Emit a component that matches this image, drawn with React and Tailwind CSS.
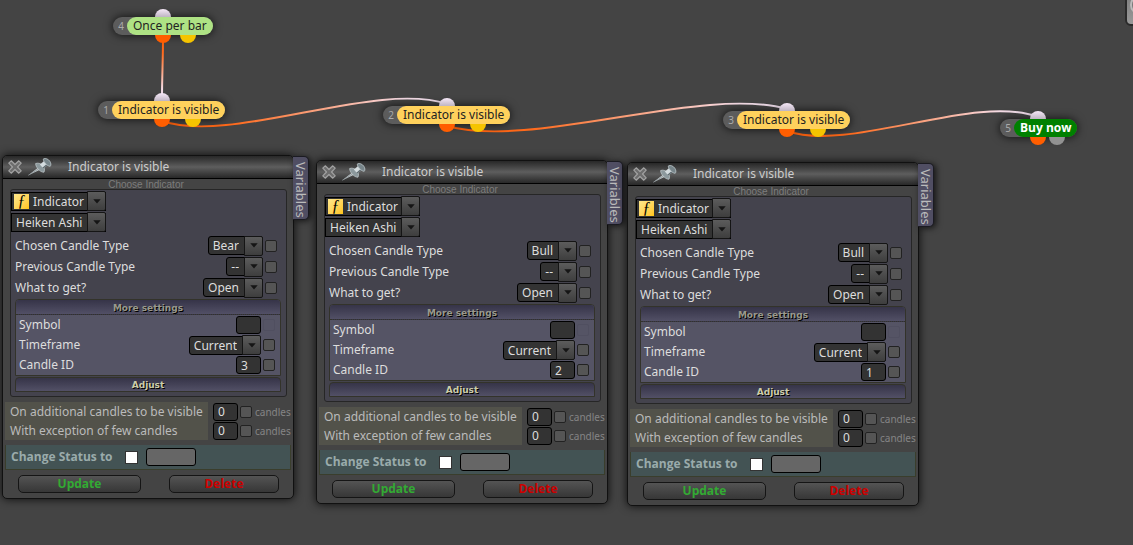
import React, { useState } from "react";

const NODES = [
    { id: 4, label: "Once per bar", pos: "left-[113px] top-[17px]", color: "bg-[#aee284] text-[#222]", port: "left-[42px]", port2: "left-[67px] bg-[#f5c400]" },
    { id: 1, label: "Indicator is visible", pos: "left-[98px] top-[101px]", color: "bg-[#ffd15c] text-[#222]", port: "left-[56px]", port2: "left-[87px] bg-[#f5c400]" },
    { id: 2, label: "Indicator is visible", pos: "left-[383px] top-[106px]", color: "bg-[#ffd15c] text-[#222]", port: "left-[56px]", port2: "left-[87px] bg-[#f5c400]" },
    { id: 3, label: "Indicator is visible", pos: "left-[723px] top-[111px]", color: "bg-[#ffd15c] text-[#222]", port: "left-[56px]", port2: "left-[87px] bg-[#f5c400]" },
    { id: 5, label: "Buy now", pos: "left-[1000px] top-[119px]", color: "bg-[#008000] text-white font-['Open_Sans',sans-serif] font-bold", port: "left-[30px]", port2: "left-[49px] bg-[#929292]" },
];

const WINDOWS = [
    { id: 1, title: "Indicator is visible", pos: "left-[2px] top-[155px]", candle: "Bear", candleId: "3" },
    { id: 2, title: "Indicator is visible", pos: "left-[316px] top-[160px]", candle: "Bull", candleId: "2" },
    { id: 3, title: "Indicator is visible", pos: "left-[627px] top-[162px]", candle: "Bull", candleId: "1" },
];

const WIRES = [
    { id: "w1", d: "M163 38 C163 58 162 78 162 98", x1: 163, y1: 38, x2: 162, y2: 98 },
    { id: "w2", d: "M162 121 C232 145 376 80 447 104", x1: 162, y1: 121, x2: 447, y2: 104 },
    { id: "w3", d: "M447 126 C532 150 702 85 787 109", x1: 447, y1: 126, x2: 787, y2: 109 },
    { id: "w4", d: "M787 131 C850 153 975 93 1038 117", x1: 787, y1: 131, x2: 1038, y2: 117 },
];

const Wires = () => (
    <svg className="absolute left-0 top-0 pointer-events-none" width="1133" height="150" fill="none">
        <defs>
            {WIRES.map((w) => (
                <linearGradient key={w.id} id={w.id} gradientUnits="userSpaceOnUse" x1={w.x1} y1={w.y1} x2={w.x2} y2={w.y2}>
                    <stop offset="0" stopColor="#ff5f0a" />
                    <stop offset="0.25" stopColor="#ff6a1c" />
                    <stop offset="0.85" stopColor="#f6dce6" />
                    <stop offset="1" stopColor="#f3e4f3" />
                </linearGradient>
            ))}
        </defs>
        {WIRES.map((w) => (
            <path key={w.id} d={w.d} stroke={`url(#${w.id})`} strokeWidth="2" />
        ))}
    </svg>
);

const Node = ({ node }) => (
    <div className={`absolute ${node.pos}`}>
        <button
            type="button"
            className="flex h-[18px] items-center rounded-full bg-[#5c5c5c] shadow-[0_0_10px_rgba(0,0,0,0.8)] whitespace-nowrap"
        >
            <span className={`absolute -top-2 size-4 rounded-full bg-linear-to-b from-[#f6e8f8] to-[#8a8490] ${node.port}`} />
            <span className={`absolute top-[10px] size-4 rounded-full bg-[#ff5e00] ${node.port}`} />
            <span className={`absolute top-[10px] size-4 rounded-full ${node.port2}`} />
            <span className="w-[14px] pl-[2px] text-center text-[10px] leading-[18px] text-[#aaa]">{node.id}</span>
            <span className={`relative h-[18px] rounded-full px-[6px] text-[12px] leading-[18px] ${node.color}`}>
                {node.label}
            </span>
        </button>
    </div>
);

const CloseIcon = () => (
    <svg width="14" height="14" viewBox="0 0 14 14">
        <path
            d="M3.2 .8 7 4.5 10.8 .8 13.2 3.2 9.5 7 13.2 10.8 10.8 13.2 7 9.5 3.2 13.2 .8 10.8 4.5 7 .8 3.2Z"
            fill="#6d6d6d"
            stroke="#a2a2a2"
            strokeWidth="1.2"
            strokeLinejoin="round"
        />
    </svg>
);

const PinIcon = () => (
    <svg width="24" height="18" viewBox="0 0 24 18">
        <path d="M.3 17.3 11.2 8.8 13 11.2Z" fill="#c5cdd0" />
        <path d="M.3 17.3 12 10" stroke="#8b9498" strokeWidth=".8" />
        <path d="M7.6 5.6C9.5 4.7 12.6 5.2 14.6 7.4 16.6 9.6 17 12.3 16 14.2 13.7 14.4 11.4 12.6 9.8 10.6 8.5 9 7.6 7.2 7.6 5.6Z" fill="#8c999d" stroke="#c3cccf" strokeWidth=".7" />
        <path d="M11.8 6.6 16.8 2.6 20.4 6.4 15.4 10.6Z" fill="#d4dcdf" />
        <path d="M14.4 9.8 19.2 5.6 20.4 6.4 15.4 10.6Z" fill="#5c696e" />
        <path d="M15.4 .9C17.6-.2 20.2 1 21.8 3.2 23 5 23.3 7.2 22.2 8.3 20.2 8.2 18.4 6.6 17 4.9 15.8 3.4 15.1 2 15.4.9Z" fill="#77858a" stroke="#bcc6ca" strokeWidth=".8" />
    </svg>
);

const Dropdown = ({ id, label, options, wide, icon }) => (
    <span className="relative flex h-5 items-center">
        {icon && (
            <span
                aria-hidden="true"
                className="pointer-events-none absolute left-[3px] size-[15px] bg-linear-to-br from-[#ffe88a] to-[#ffc40a] text-center font-['Liberation_Serif',serif] text-[16px] leading-[14px] text-black italic"
            >
                ƒ
            </span>
        )}
        <select
            id={id}
            aria-label={label}
            className={`field-sizing-content h-[19px] appearance-none border border-black bg-[#333] text-[12px] leading-[17px] text-[#ddd] outline-none ${
                icon ? "pl-[21px] pr-[19px]" : "pl-1 pr-[23px]"
            } ${wide ? "w-[95px]" : "rounded-[3px]"}`}
        >
            {options.map((o) => (
                <option key={o}>{o}</option>
            ))}
        </select>
        <span className="pointer-events-none absolute right-0 flex h-5 w-[19px] items-center justify-center rounded-r-[2px] border border-[#151515] bg-linear-to-b from-[#5c5c5c] to-[#3e3e3e]">
            <svg width="8" height="5" viewBox="0 0 8 5">
                <path d="M.3 .2H7.7L4 4.6Z" fill="#151515" />
            </svg>
        </span>
    </span>
);

const Tick = ({ label, faded }) => (
    <input
        type="checkbox"
        aria-label={label}
        className={`size-3 shrink-0 appearance-none rounded-[2px] border checked:bg-[#ddd] ${
            faded ? "border-[#504f60] bg-transparent" : "border-[#222] bg-[#555]"
        }`}
    />
);

const TextBox = ({ id, value }) => (
    <input
        id={id}
        type="text"
        defaultValue={value}
        className="h-[18px] w-[25px] shrink-0 rounded-[3px] border border-black bg-[#333] px-1 text-[12px] leading-4 text-[#ddd] outline-none"
    />
);

const Row = ({ id, label, children, nested, faded }) => (
    <div className={`flex items-center gap-[2px] ${nested ? "h-5 pl-[3px] pr-[5px]" : "h-[21px] pr-1"}`}>
        <label htmlFor={id} className="flex-1">
            {label}
        </label>
        {children}
        <Tick label={`${label} adjust`} faded={faded} />
    </div>
);

const ExtraRow = ({ id, label }) => (
    <div className="flex h-[19px] items-center">
        <label htmlFor={id} className="mr-[5px] h-[19px] w-[203px] bg-[#52524a] pl-[5px] leading-[19px] text-[#bbb]">
            {label}
        </label>
        <TextBox id={id} value="0" />
        <span className="flex items-center gap-[3px] pl-[2px] text-[10px] text-[#848484]">
            <Tick label={`${label} in candles`} />
            candles
        </span>
    </div>
);

const BAR =
    "block h-[15px] w-full border-[#33332a] bg-linear-to-b from-[#363448] to-[#525066] text-center font-['DejaVu_Sans',sans-serif] text-[9px] font-bold [text-shadow:1px_1px_0_#000]";

const BUTTON =
    "h-[18px] rounded-[5px] border border-[#151515] bg-linear-to-b from-[#545454] to-[#373737] font-['Open_Sans',sans-serif] text-[12px] leading-4 font-bold";

const IndicatorWindow = ({ win }) => {
    const [status, setStatus] = useState("");
    const key = `win${win.id}`;

    return (
        <section
            className={`absolute w-[292px] rounded-[5px] border border-[#111] bg-[#444] text-[12px] leading-4 text-[#ddd] shadow-[0_0_10px_rgba(0,0,0,0.85)] ${win.pos}`}
        >
            {/* Side tab */}
            <button
                type="button"
                className="absolute top-0 left-full h-[64px] rounded-r-[5px] border border-l-0 border-[#1b1b22] bg-[#504e63] pt-1 pl-px text-[13px] leading-[14px] text-[#bbb] shadow-[2px_1px_6px_rgba(0,0,0,0.7)] [writing-mode:vertical-rl]"
            >
                Variables
            </button>

            {/* Title bar */}
            <header className="flex h-[23px] items-center rounded-t-[4px] border-b border-black bg-linear-to-b from-[#282828] via-[#5e5e5e] to-[#282828] pl-[5px]">
                <button type="button" aria-label="Close">
                    <CloseIcon />
                </button>
                <button type="button" aria-label="Pin" className="ml-[6px]">
                    <PinIcon />
                </button>
                <h2 className="ml-4 text-[#ccc]">{win.title}</h2>
            </header>

            <div className="px-[2px] pb-[5px]">
                <p className="h-[10px] pr-1 text-center font-['Liberation_Sans',sans-serif] text-[10px] leading-[11px] text-[#7d7d7d]">
                    Choose Indicator
                </p>

                <div className="mr-1 ml-[5px] rounded-[3px] border border-[#262626] bg-[#44434d] pt-px pb-1">
                    <div className="flex flex-col items-start gap-px">
                        <Dropdown label="Source" options={["Indicator", "Price", "Value"]} wide icon />
                        <Dropdown label="Indicator" options={["Heiken Ashi", "Moving Average", "RSI"]} wide />
                    </div>

                    <div className="mt-[3px] pr-[5px] pl-1">
                        <Row id={`${key}-type`} label="Chosen Candle Type">
                            <Dropdown id={`${key}-type`} options={[win.candle, win.candle === "Bear" ? "Bull" : "Bear"]} />
                        </Row>
                        <Row id={`${key}-prev`} label="Previous Candle Type">
                            <Dropdown id={`${key}-prev`} options={["--", "Bull", "Bear"]} />
                        </Row>
                        <Row id={`${key}-get`} label="What to get?">
                            <Dropdown id={`${key}-get`} options={["Open", "High", "Low", "Close"]} />
                        </Row>

                        <div className="mt-px rounded-t-[4px] border border-[#33332a] bg-[#555465]">
                            <button type="button" className={`${BAR} rounded-t-[3px] border-b border-dotted leading-4 text-[#99998c]`}>
                                More settings
                            </button>
                            <Row id={`${key}-symbol`} label="Symbol" nested faded>
                                <TextBox id={`${key}-symbol`} value="" />
                            </Row>
                            <Row id={`${key}-tf`} label="Timeframe" nested>
                                <Dropdown id={`${key}-tf`} options={["Current", "M1", "H1", "D1"]} />
                            </Row>
                            <Row id={`${key}-cid`} label="Candle ID" nested>
                                <TextBox id={`${key}-cid`} value={win.candleId} />
                            </Row>
                        </div>
                        <button type="button" className={`${BAR} mt-px rounded-t-[4px] border leading-[14px] text-[#ccccaa]`}>
                            Adjust
                        </button>
                    </div>
                </div>

                <div className="mt-[5px]">
                    <ExtraRow id={`${key}-add`} label="On additional candles to be visible" />
                    <ExtraRow id={`${key}-exc`} label="With exception of few candles" />
                </div>

                <div className="mt-[5px] flex h-[25px] items-center border border-t-0 border-[#3a3e2c] bg-[#435354] pl-[5px] text-[#9aabab]">
                    <label htmlFor={`${key}-status`} className="w-[114px] font-['Open_Sans',sans-serif] font-bold">
                        Change Status to
                    </label>
                    <input
                        type="checkbox"
                        aria-label="Enable status change"
                        className="size-[13px] appearance-none border border-[#333] bg-white checked:bg-[#888]"
                    />
                    <input
                        id={`${key}-status`}
                        type="text"
                        value={status}
                        onChange={(e) => setStatus(e.target.value)}
                        className="ml-2 h-[18px] w-[50px] rounded-[3px] border border-black bg-[#666] px-1 outline-none"
                    />
                </div>

                <div className="mt-[5px] flex gap-7 pr-3 pl-[13px]">
                    <button type="button" className={`${BUTTON} w-[123px] text-[#33aa33]`}>
                        Update
                    </button>
                    <button type="button" className={`${BUTTON} w-[110px] text-[#cc0000]`}>
                        Delete
                    </button>
                </div>
            </div>
        </section>
    );
};

export default function App() {
    return (
        <main className="relative min-h-screen overflow-hidden bg-[#444] font-['Noto_Sans',sans-serif]">
            <Wires />
            {NODES.map((n) => (
                <Node key={n.id} node={n} />
            ))}
            {WINDOWS.map((w) => (
                <IndicatorWindow key={w.id} win={w} />
            ))}

            {/* Toolbox handle, tucked under the screen edge */}
            <button
                type="button"
                aria-label="Open toolbox"
                className="absolute -top-4 -right-8 flex h-[42px] w-10 items-center rounded-[6px] border-2 border-[#2a2a2a] bg-linear-to-b from-[#777] to-[#999] pl-[3px]"
            >
                <span className="size-5 rounded-full border-2 border-[#bbb] bg-[#777]" />
            </button>
        </main>
    );
}
